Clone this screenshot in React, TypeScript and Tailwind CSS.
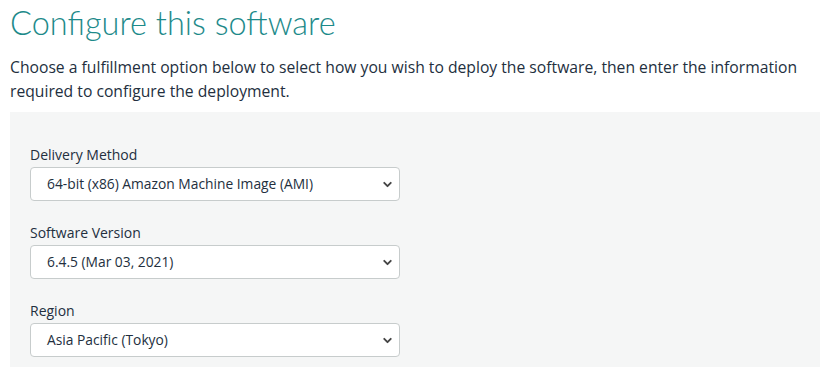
import { ChevronDown } from "lucide-react"

const fields = [
    { label: "Delivery Method", value: "64-bit (x86) Amazon Machine Image (AMI)" },
    { label: "Software Version", value: "6.4.5 (Mar 03, 2021)" },
    { label: "Region", value: "Asia Pacific (Tokyo)" },
]

function SelectField({ label, value }: { label: string; value: string }) {
    return (
        <div className="flex flex-col">
            <label className="text-[14px] leading-[18px] text-[#232f3e] mb-[3px]">{label}</label>
            <div className="flex items-center justify-between w-[370px] h-[34px] bg-white border border-[#c7cccc] rounded-[4px] pl-[16px] pr-[5px]">
                <span className="text-[13.8px] text-[#232f3e]">{value}</span>
                <ChevronDown size={13} strokeWidth={3.5} color="#444" />
            </div>
        </div>
    )
}

export default function App() {
    return (
        <div className="w-[831px] h-[367px] overflow-hidden bg-white px-[10px] font-['Open_Sans',sans-serif]">
            <h1 className="text-[32.5px] leading-[40px] font-light text-[#1d8a8a] mt-[3px] font-['Lato',sans-serif]">Configure this software</h1>
            <p className="text-[15.7px] leading-[24px] text-[#232f3e] mt-[12px]">
                Choose a fulfillment option below to select how you wish to deploy the software, then enter the information
                required to configure the deployment.
            </p>
            <div className="mt-[9px] w-[810px] h-[300px] bg-[#f5f6f6] px-[20px] pt-[34px] flex flex-col gap-[23px]">
                {fields.map((f) => (
                    <SelectField key={f.label} label={f.label} value={f.value} />
                ))}
            </div>
        </div>
    )
}
